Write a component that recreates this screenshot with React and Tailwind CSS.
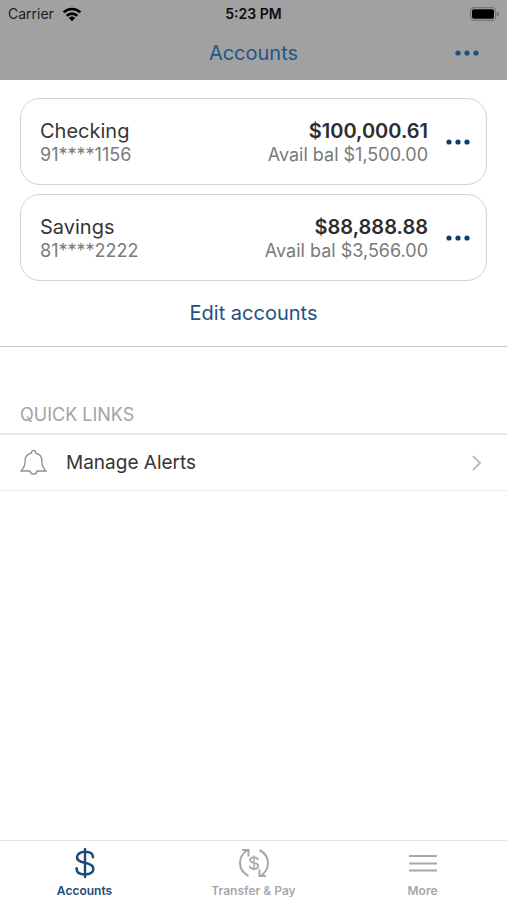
import React from 'react'

const ACCOUNTS = [
  { name: 'Checking', number: '91****1156', balance: '$100,000.61', available: '$1,500.00' },
  { name: 'Savings', number: '81****2222', balance: '$88,888.88', available: '$3,566.00' },
]

const TABS = [
  { label: 'Accounts', Icon: DollarIcon, active: true },
  { label: 'Transfer & Pay', Icon: TransferIcon },
  { label: 'More', Icon: MenuIcon },
]

export default function App() {
  return (
    <div className="flex min-h-screen flex-col bg-white font-['Inter',sans-serif] text-[#363636]">
      <header className="bg-[#a1a1a1]">
        <StatusBar />
        <div className="grid h-13 grid-cols-3 items-center px-5 pb-0.5">
          <h1 className="col-start-2 text-center text-xl leading-6 text-[#235688]">Accounts</h1>
          <button type="button" aria-label="Options" className="justify-self-end p-2 text-[#1d4e80]">
            <DotsIcon />
          </button>
        </div>
      </header>

      <main className="flex-1">
        <section className="flex flex-col border-b border-[#c8c8c8] px-5 pt-[18px] pb-px">
          <ul className="flex flex-col gap-[9px]">
            {ACCOUNTS.map((account) => (
              <AccountCard key={account.name} {...account} />
            ))}
          </ul>
          <button type="button" className="self-center py-5 text-xl leading-6 text-[#25507e]">
            Edit accounts
          </button>
        </section>

        <section>
          <h2 className="border-b-2 border-[#e6e6e6] px-5 pt-14 pb-1.5 text-lg leading-6 text-[#a3a3a3]">
            QUICK LINKS
          </h2>
          <a href="#alerts" className="flex h-14 items-center gap-[19px] border-b border-[#ececec] px-5">
            <BellIcon />
            <span className="flex-1 text-[19px] leading-6">Manage Alerts</span>
            <ChevronIcon />
          </a>
        </section>
      </main>

      <nav className="grid h-15 grid-cols-3 border-t border-[#e4e4e4]">
        {TABS.map(({ label, Icon, active }) => (
          <a
            key={label}
            href="#tab"
            aria-current={active ? 'page' : undefined}
            className={
              active
                ? 'flex flex-col items-center pt-1 text-[#1d4a78]'
                : 'flex flex-col items-center pt-1 text-[#a8a8a8]'
            }
          >
            <Icon />
            <span className="pt-0.5 text-xs leading-4 font-semibold">{label}</span>
          </a>
        ))}
      </nav>
    </div>
  )
}

function StatusBar() {
  return (
    <div className="grid h-7 grid-cols-3 items-center px-2 text-sm leading-4 text-[#1c1c1c]">
      <div className="flex items-center gap-2">
        <span>Carrier</span>
        <WifiIcon />
      </div>
      <span className="text-center font-semibold text-[#0c0c0c]">5:23 PM</span>
      <div className="justify-self-end">
        <BatteryIcon />
      </div>
    </div>
  )
}

function AccountCard({ name, number, balance, available }) {
  return (
    <li className="flex h-[87px] items-center rounded-[20px] border border-[#d2d2d2] pr-2 pl-[19px]">
      <div className="flex-1 pt-0.5">
        <div className="text-xl leading-6">{name}</div>
        <div className="text-lg leading-6 text-[#7a7a7a]">{number}</div>
      </div>
      <div className="pt-0.5 text-right">
        <div className="text-xl leading-6 font-semibold text-[#2d2d2d]">{balance}</div>
        <div className="text-lg leading-6 text-[#7a7a7a]">Avail bal {available}</div>
      </div>
      <button type="button" aria-label={`${name} options`} className="ml-2.5 p-2 text-[#123e70]">
        <DotsIcon />
      </button>
    </li>
  )
}

function DotsIcon() {
  return (
    <svg width="24" height="6" viewBox="0 0 24 6" fill="currentColor" aria-hidden="true">
      <circle cx="3" cy="3" r="2.6" />
      <circle cx="12" cy="3" r="2.6" />
      <circle cx="21" cy="3" r="2.6" />
    </svg>
  )
}

function WifiIcon() {
  return (
    <svg width="20" height="15" viewBox="0 0 20 15" fill="none" stroke="#000" strokeWidth="2.6" aria-hidden="true">
      <path d="M1.6 5.4a12 12 0 0 1 16.8 0" />
      <path d="M4.7 8.8a7.6 7.6 0 0 1 10.6 0" />
      <path d="M10 14.2 6.9 11a4.5 4.5 0 0 1 6.2 0z" fill="#000" stroke="none" />
    </svg>
  )
}

function BatteryIcon() {
  return (
    <svg width="30" height="14" viewBox="0 0 30 14" aria-hidden="true">
      <rect x="1.6" y="0.6" width="25" height="12.8" rx="3.6" fill="none" stroke="#777" strokeWidth="1.2" />
      <rect x="3" y="2.2" width="22" height="9.6" rx="1.8" fill="#000" />
      <path d="M27.8 4.6c1.6.5 2.2 1.4 2.2 2.4s-.6 1.9-2.2 2.4z" fill="#777" />
    </svg>
  )
}

function BellIcon() {
  return (
    <svg width="27" height="27" viewBox="0 0 27 27" fill="none" stroke="#8e8e8e" strokeWidth="1.3" strokeLinejoin="round" aria-hidden="true">
      <path d="M11.4 4.1C11.4 2.4 12.2 1.4 13.5 1.4s2.1 1 2.1 2.7c4 .9 6.3 3.800 6.300 7.600 0 4.700.8 7.300 4.200 10.300H17c-.4 2-1.700 3.200-3.500 3.200S10.400 24 10 22H.9c3.400-3 4.200-5.600 4.200-10.300 0-3.800 2.300-6.700 6.300-7.600z" />
    </svg>
  )
}

function ChevronIcon() {
  return (
    <svg width="20" height="16" viewBox="0 0 20 16" fill="none" stroke="#bdbdbd" strokeWidth="2" aria-hidden="true">
      <path d="m6 1 7 7-7 7" />
    </svg>
  )
}

function DollarIcon() {
  return (
    <svg width="32" height="36" viewBox="0 0 32 36" fill="none" stroke="currentColor" strokeWidth="2.6" strokeLinecap="round" aria-hidden="true">
      <path d="M16 4v28" strokeWidth="2.4" />
      <path d="M24 12.2c0-3.400-3.200-5.400-8-5.400-4.700 0-8 2.200-8 5.500 0 3.200 2.500 4.500 7.800 5.500 5.800 1.100 8.600 2.500 8.600 6 0 3.400-3.400 5.600-8.400 5.600-5.200 0-8.400-2.200-8.400-6" />
    </svg>
  )
}

function TransferIcon() {
  return (
    <svg width="32" height="36" viewBox="0 0 32 36" fill="none" stroke="currentColor" strokeWidth="2" aria-hidden="true">
      <path d="M10.500 31C-.6 25-.6 12 9.300 5.200" />
      <path d="M4 5h6.500v6.500" />
      <path d="M21.500 5c11.100 6 11.100 19 1.200 25.800" />
      <path d="M28 31h-6.500v-6.500" />
      <path d="M16 10.600v14.800" strokeWidth="1.4" />
      <path d="M20 15c0-1.700-1.600-2.700-4-2.700s-4 1.100-4 2.700 1.200 2.300 4 2.900 4.300 1.300 4.300 3-1.800 2.800-4.300 2.800-4.300-1.100-4.300-3" strokeWidth="1.8" />
    </svg>
  )
}

function MenuIcon() {
  return (
    <svg width="32" height="36" viewBox="0 0 32 36" fill="none" stroke="currentColor" strokeWidth="1.8" aria-hidden="true">
      <path d="M2 11h28M2 18.500h28M2 25.500h28" />
    </svg>
  )
}
